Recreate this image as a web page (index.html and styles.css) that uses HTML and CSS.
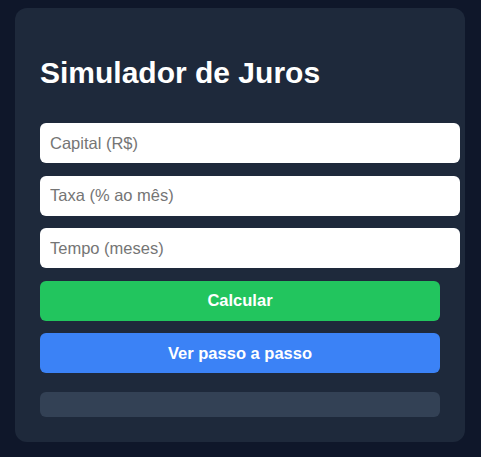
FILE: index.html
```html
<!DOCTYPE html>
<html lang="pt-BR">
<head>
<meta charset="utf-8">
<title>Simulador de Juros</title>
<link rel="stylesheet" href="styles.css">
</head>
<body>
<div class="card">
  <h1 class="title">Simulador de Juros</h1>
  <div class="form">
    <input class="field" type="text" placeholder="Capital (R$)">
    <input class="field" type="text" placeholder="Taxa (% ao mês)">
    <input class="field" type="text" placeholder="Tempo (meses)">
    <button class="btn btn-green" type="button">Calcular</button>
    <button class="btn btn-blue" type="button">Ver passo a passo</button>
    <div class="result"></div>
  </div>
</div>
</body>
</html>
```

FILE: styles.css
```css
html, body {
  margin: 0;
  background: #0f172a;
}
body {
  padding: 8px 16px 8px 15px;
  font-family: "Liberation Sans", Arial, sans-serif;
}
.card {
  width: 400px;
  padding: 25px;
  background: #1e293b;
  border-radius: 12px;
}
.title {
  margin: 23px 0 0;
  font-size: 30px;
  line-height: 34px;
  font-weight: bold;
  color: #ffffff;
}
.form {
  margin-top: 33px;
  display: flex;
  flex-direction: column;
  gap: 12.5px;
}
.field {
  box-sizing: border-box;
  width: 420px;
  height: 40px;
  padding: 0 10px;
  border: none;
  border-radius: 6px;
  background: #ffffff;
  font-family: "Liberation Sans", Arial, sans-serif;
  font-size: 16.5px;
  color: #111;
  outline: none;
}
.field::placeholder {
  color: #757575;
}
.btn {
  height: 40px;
  width: 100%;
  border: none;
  border-radius: 6px;
  color: #ffffff;
  font-family: "Liberation Sans", Arial, sans-serif;
  font-size: 16.5px;
  font-weight: bold;
  cursor: pointer;
}
.btn-green { background: #22c55e; }
.btn-blue { background: #3b82f6; }
.result {
  margin-top: 6.5px;
  height: 25px;
  border-radius: 6px;
  background: #334155;
}
```
